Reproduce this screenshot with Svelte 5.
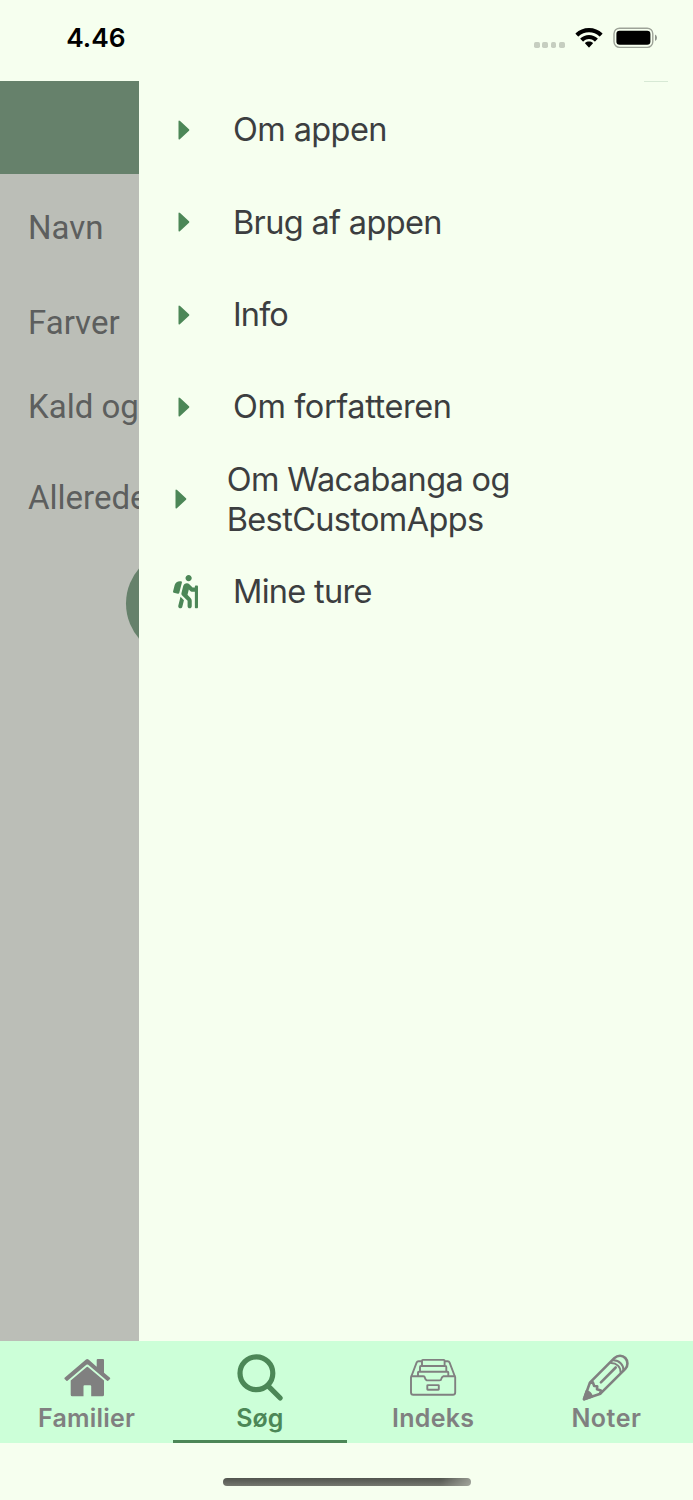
<script>
  const fields = [
    { label: 'Navn', height: 107 },
    { label: 'Farver', height: 84 },
    { label: 'Kald og sang', height: 83 },
    { label: 'Allerede set', height: 100 }
  ];
  const menu = [
    { label: 'Om appen', kind: 'caret', track: -0.6 },
    { label: 'Brug af appen', kind: 'caret', track: -0.67 },
    { label: 'Info', kind: 'caret', track: -0.9 },
    { label: 'Om forfatteren', kind: 'caret', track: -0.42 },
    { label: 'Om Wacabanga og BestCustomApps', kind: 'caret', track: -0.64, wide: true },
    { label: 'Mine ture', kind: 'hike', track: -0.7 }
  ];
  const tabs = [
    { label: 'Familier', icon: 'home', track: 0.2 },
    { label: 'Søg', icon: 'search', active: true, track: 0 },
    { label: 'Indeks', icon: 'drawer', track: 0.25 },
    { label: 'Noter', icon: 'pencil', track: 0.5 }
  ];
</script>

<div class="phone">
  <header class="status">
    <span class="time">4.46</span>
    <div class="indicators">
      <div class="dots"><i></i><i></i><i></i><i></i></div>
      <svg class="wifi" width="28" height="22" viewBox="0 0 28 22">
        <path d="M14 1C8.800 1 4.100 3 .7 6.300Q.3 6.700.7 7.100L2.900 9.300Q3.300 9.700 3.700 9.300C6.400 6.700 10 5.200 14 5.200S21.600 6.700 24.300 9.300Q24.700 9.700 25.100 9.300L27.300 7.100Q27.700 6.700 27.300 6.300C23.900 3 19.200 1 14 1Z" />
        <path d="M14 7.900C10.700 7.900 7.700 9.200 5.500 11.200Q5 11.700 5.500 12.100L7.700 14.300Q8.100 14.700 8.600 14.300C10.100 13 11.900 12.100 14 12.100S17.900 13 19.400 14.300Q19.900 14.700 20.300 14.300L22.500 12.100Q23 11.700 22.500 11.200C20.300 9.200 17.300 7.900 14 7.900Z" />
        <path d="M14 14.400C12.500 14.400 11.200 14.900 10.200 15.800Q9.800 16.200 10.200 16.600L13.600 20.300Q14 20.700 14.400 20.300L17.800 16.600Q18.200 16.200 17.800 15.800C16.800 14.900 15.500 14.400 14 14.400Z" />
      </svg>
      <svg class="battery" width="45" height="22" viewBox="0 0 45 22">
        <rect x="1" y="1.200" width="38.800" height="19.200" rx="5.600" fill="none" stroke="#9da398" stroke-width="1.400" />
        <rect x="3.400" y="3.800" width="34" height="14" rx="3.200" />
        <path d="M42 7.600Q44 8.500 44 10.800T42 14Z" fill="#8f958c" />
      </svg>
    </div>
  </header>

  <main>
    <section class="page">
      <div class="titlebar"></div>
      {#each fields as f}
        <div class="field" style="height:{f.height}px">{f.label}</div>
      {/each}
      <div class="round"></div>
    </section>
    <nav class="drawer">
      <div class="hairline"></div>
      {#each menu as m}
        <div class="item" class:wide={m.wide}>
          <span class="lead">
            {#if m.kind === 'caret'}
              <svg width="12" height="20" viewBox="0 0 12 20"><path d="M.5 1.500Q.5-.3 2.100 1L11 9.300Q11.800 10 11 10.700L2.100 19Q.5 20.300.5 18.500Z" /></svg>
            {:else}
              <svg class="hiker" width="25" height="33.300" viewBox="0 0 384 512"><path d="M80.950 472.230c-4.280 17.160 6.140 34.530 23.280 38.810 2.610.66 5.220.95 7.800.95 14.330 0 27.370-9.700 31.020-24.230l25.240-100.970-52.780-52.780-34.560 138.220zm14.890-196.120L137 117c2.190-8.420-3.140-16.950-11.920-19.060-43.880-10.520-88.350 15.070-99.320 57.170L.49 253.240c-2.190 8.420 3.140 16.950 11.920 19.060l63.560 15.250c8.790 2.100 17.680-3.020 19.870-11.440zM368 160h-16c-8.840 0-16 7.160-16 16v16h-34.750l-46.780-46.780C243.380 134.110 228.610 128 212.910 128c-27.020 0-50.470 18.300-57.030 44.520l-26.920 107.720a32.012 32.012 0 0 0 8.420 30.390L224 397.250V480c0 17.670 14.330 32 32 32s32-14.330 32-32v-82.750c0-17.090-6.660-33.160-18.750-45.250l-46.820-46.820c.15-.5.49-.89.62-1.410l19.890-79.570 22.430 22.430c6 6 14.140 9.380 22.620 9.380h48v240c0 8.840 7.160 16 16 16h16c8.840 0 16-7.160 16-16V176c.01-8.840-7.150-16-15.990-16zM240 96c26.510 0 48-21.490 48-48S266.510 0 240 0s-48 21.490-48 48 21.490 48 48 48z" /></svg>
            {/if}
          </span>
          <span class="text" style="letter-spacing:{m.track}px">{m.label}</span>
        </div>
      {/each}
    </nav>
  </main>

  <footer class="tabs">
    {#each tabs as t}
      <div class="tab" class:active={t.active}>
        <svg width="46" height="46" viewBox="0 0 46 46">
          {#if t.icon === 'home'}
            <g fill="currentColor">
              <path d="M22 4.500Q23.200 3.500 24.500 4.500L32.700 11.700V5Q32.700 4 33.700 4H39Q40 4 40 5V17.800L46 22.800Q46.500 23.300 46 23.900L44.200 25.800Q43.700 26.300 43.100 25.800L24.200 9.800Q23.300 9.100 22.400 9.800L3.500 25.800Q2.900 26.300 2.400 25.800L.6 23.900Q.1 23.300.6 22.800Z" />
              <path d="M22.700 12Q23.300 11.500 23.900 12L40 25.500V39.700Q40 41.200 38.500 41.200H27.200V31.300Q27.200 30.200 26.200 30.200H20.500Q19.500 30.200 19.500 31.300V41.200H8.200Q6.700 41.200 6.700 39.700V25.500Z" />
            </g>
          {:else if t.icon === 'search'}
            <g fill="none" stroke="currentColor" stroke-width="5.200" stroke-linecap="round">
              <circle cx="19.400" cy="18.300" r="16.400" />
              <path d="M31.300 31.200 43.200 43" />
            </g>
          {:else if t.icon === 'drawer'}
            <g fill="none" stroke="currentColor" stroke-width="1.900" stroke-linejoin="round">
              <path d="M2 21.300H13.300Q14.700 21.300 15 23T16.800 25.400H29.600Q31.200 25.400 31.400 23.700T33.200 21.300H44.200Q45.200 21.300 45.200 22.300V37.600Q45.200 39.800 43 39.800H3.200Q1 39.800 1 37.600V22.300Q1 21.300 2 21.300Z" />
              <path d="M1.300 21.500 6.700 7.300Q7.200 6.200 8.500 6.200H11.500M44.900 21.500 39.500 7.300Q39 6.200 37.700 6.200H34.700M12 10.900V5.700Q12 4.900 12.800 4.900H33.800Q34.600 4.900 34.600 5.700V10.900M10 16.700V11.900Q10 11 10.900 11H35.400Q36.300 11 36.300 11.900V16.700M8 21.200V17.600Q8 16.800 8.800 16.800H37.500Q38.300 16.800 38.300 17.600V21.200" />
              <rect x="17.300" y="30.100" width="11.500" height="4.700" rx=".5" />
            </g>
          {:else}
            <g fill="none" stroke="currentColor" stroke-width="2.600" stroke-linejoin="round" stroke-linecap="round">
              <path d="M1 44.200 6.900 27.600 31.300 3.200C34.800-.2 39.500 0 42.300 3S45.200 10.800 42.300 13.800L17.400 38.700Z" />
              <path d="M30.200 5.200C36 5 41 10 40.400 15.700M28 8C33.500 7.900 37.800 12 37.600 17.500" stroke-width="1.900" />
              <path d="M32.700 12.500 17.900 27.300" />
              <path d="M7.200 27.900 9.800 27.200 11.200 31 14.200 31.200 14 34.300 17.800 35.600 17.200 38.500" />
              <path d="M1 44.200 3.600 36.300Q7.500 37.600 8.700 41.600Z" fill="currentColor" />
            </g>
          {/if}
        </svg>
        <span style="letter-spacing:{t.track}px">{t.label}</span>
      </div>
    {/each}
  </footer>
  <div class="bottom"><div class="handle"></div></div>
</div>

<style>
  :global(body) { background: #f6ffef; }
  * { box-sizing: border-box; }
  .phone { width: 693px; height: 1500px; display: flex; flex-direction: column; background: #f6ffef; overflow: hidden; font-family: Inter, sans-serif; }
  svg { display: block; overflow: visible; flex: none; }
  .status { height: 81.400px; flex: none; display: flex; justify-content: space-between; padding: 0 35.300px 0 66.200px; }
  .time { font-weight: 600; font-size: 26.300px; line-height: 32px; padding-top: 21.800px; letter-spacing: 0; color: #000; }
  .indicators { display: flex; padding-top: 27px; }
  .dots { display: flex; gap: 2.700px; padding-top: 15px; margin-right: 10px; }
  .dots i { width: 5.700px; height: 5.700px; border-radius: 1.700px; background: #c6cec0; }
  .wifi { margin-right: 10px; }
  main { height: 1260px; flex: none; display: flex; }
  .page { width: 139px; flex: none; overflow: hidden; background: #bbbeb7; font-family: Roboto, sans-serif; font-size: 33px; color: #5d5f5e; }
  .titlebar { height: 92.400px; background: #66816b; }
  .field { display: flex; align-items: center; padding-left: 28px; white-space: nowrap; }
  .round { width: 107px; height: 107px; border-radius: 50%; background: #66816b; margin: 2px 0 0 126px; }
  .drawer { flex: 1; }
  .hairline { width: 24px; height: 1px; margin: 0 0 1.500px 504.500px; background: #d7e9d5; }
  .item { height: 92.300px; display: flex; align-items: center; padding-left: 34px; color: #3c3e40; font-size: 32.500px; line-height: 39.500px; }
  .lead { width: 60px; flex: none; padding-left: 5px; color: #4c8757; fill: currentColor; }
  .hiker { margin-left: -5px; }
  .wide .lead { width: 53.700px; padding-left: 2px; }
  .wide .text { padding-top: 1.500px; }
  .text { max-width: 310px; font-feature-settings: "calt" 0, "liga" 0; }
  .tabs { height: 101.300px; flex: none; display: flex; background: #ccffd8; }
  .tab { flex: 1; display: flex; flex-direction: column; align-items: center; padding-top: 13.600px; color: #808080; font-size: 25px; font-weight: 600; line-height: 30px; border-bottom: 3.400px solid transparent; }
  .tab span { margin-top: 2.500px; }
  .active { color: #4c8757; border-color: #4c8757; }
  .bottom { flex: 1; display: flex; justify-content: center; padding-top: 35.300px; }
  .handle { width: 248px; height: 8.500px; border-radius: 5px; background: linear-gradient(90deg, transparent 88%, #b7bbb1aa 100%), linear-gradient(#51544e, #74776f); }
</style>
